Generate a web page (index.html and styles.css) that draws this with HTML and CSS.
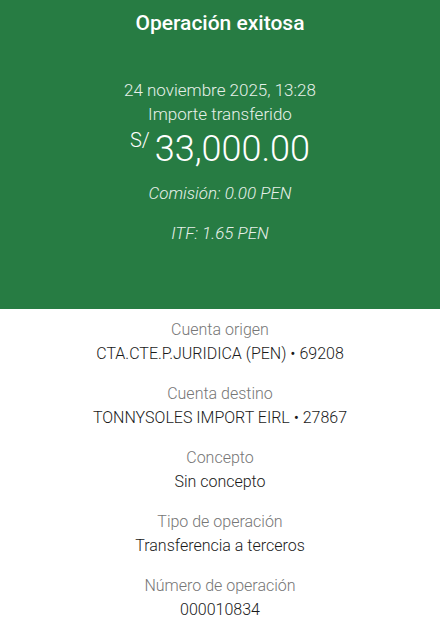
FILE: index.html
```html
<html>
<head>
  <title>Operación exitosa</title>
  <link rel="stylesheet" href="styles.css">
</head>
<body>
  <div class="header">
    <h1>Operación exitosa</h1>
    <p class="date">24 noviembre 2025, 13:28</p>
    <p class="caption">Importe transferido</p>
    <p class="amount"><span class="currency">S/</span>33,000.00</p>
    <p class="fee first">Comisión: 0.00 PEN</p>
    <p class="fee">ITF: 1.65 PEN</p>
  </div>

  <div class="details">
    <div class="item">
      <div class="label">Cuenta origen</div>
      <div class="value">CTA.CTE.P.JURIDICA (PEN) • 69208</div>
    </div>
    <div class="item">
      <div class="label">Cuenta destino</div>
      <div class="value">TONNYSOLES IMPORT EIRL • 27867</div>
    </div>
    <div class="item">
      <div class="label">Concepto</div>
      <div class="value">Sin concepto</div>
    </div>
    <div class="item">
      <div class="label">Tipo de operación</div>
      <div class="value">Transferencia a terceros</div>
    </div>
    <div class="item">
      <div class="label">Número de operación</div>
      <div class="value">000010834</div>
    </div>
  </div>
</body>
</html>
```

FILE: styles.css
```css
/* Reset */
body, h1, p {
  margin: 0;
  padding: 0;
}

body {
  font-family: Roboto, "Liberation Sans", sans-serif;
  font-weight: 300;
  background: #fff;
  text-align: center;
  width: 440px;
  height: 629px;
  overflow: hidden;
}

/* Green header */
.header {
  background: #277c43;
  color: #fff;
  height: 309px;
  box-sizing: border-box;
  padding-top: 9px;
}

h1 {
  font-size: 21px;
  font-weight: 500;
  line-height: 28px;
}

.date {
  margin-top: 42px;
  font-size: 17px;
  line-height: 22px;
  color: #e6f0e9;
}

.caption {
  margin-top: 2px;
  font-size: 17px;
  line-height: 22px;
  color: #e6f0e9;
}

.amount {
  margin-top: 6px;
  font-size: 36px;
  line-height: 36px;
}

.currency {
  font-size: 20px;
  line-height: 0;
  vertical-align: 14px;
  margin-right: 5px;
}

.fee {
  font-size: 17px;
  font-style: italic;
  line-height: 22px;
  color: #e6f0e9;
  margin-top: 18px;
}

.fee.first {
  margin-top: 15px;
}

/* Detail list */
.details {
  padding-top: 9px;
}

.item {
  margin-bottom: 16px;
}

.label {
  font-size: 16px;
  line-height: 24px;
  color: #767676;
}

.value {
  font-size: 16px;
  line-height: 24px;
  color: #1a1a1a;
}
```
